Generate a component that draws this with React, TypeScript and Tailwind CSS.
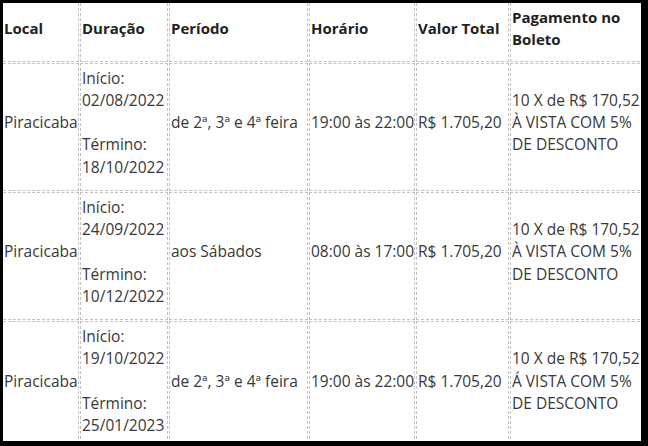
const cursos = [
  {
    local: "Piracicaba",
    inicio: "02/08/2022",
    termino: "18/10/2022",
    periodo: "de 2ª, 3ª e 4ª feira",
    horario: "19:00 às 22:00",
    valor: "R$ 1.705,20",
    vista: "À VISTA COM 5%",
  },
  {
    local: "Piracicaba",
    inicio: "24/09/2022",
    termino: "10/12/2022",
    periodo: "aos Sábados",
    horario: "08:00 às 17:00",
    valor: "R$ 1.705,20",
    vista: "À VISTA COM 5%",
  },
  {
    local: "Piracicaba",
    inicio: "19/10/2022",
    termino: "25/01/2023",
    periodo: "de 2ª, 3ª e 4ª feira",
    horario: "19:00 às 22:00",
    valor: "R$ 1.705,20",
    vista: "Á VISTA COM 5%",
  },
];

export default function App() {
  return (
    <div className="h-[446px] w-[648px] bg-black pb-[5px] pl-[3px] pr-[7px] pt-[3px]">
      <div
        className="h-full overflow-hidden bg-white text-[15.5px] leading-[22.25px] text-[#383838]"
        style={{ fontFamily: '"Open Sans", "Noto Sans", sans-serif' }}
      >
        <div className="grid grid-cols-[76px_88px_139px_106px_93px_135px] gap-px">
          <Cell col={0} header>Local</Cell>
          <Cell col={1} header>Duração</Cell>
          <Cell col={2} header>Período</Cell>
          <Cell col={3} header>Horário</Cell>
          <Cell col={4} header>Valor Total</Cell>
          <Cell col={5} header>
            Pagamento no
            <br />
            Boleto
          </Cell>

          {cursos.map((c, i) => (
            <Row key={i} c={c} />
          ))}
        </div>
      </div>
    </div>
  );
}

function Row({ c }: { c: (typeof cursos)[number] }) {
  return (
    <>
      <Cell col={0}>{c.local}</Cell>
      <Cell col={1}>
        Início:
        <br />
        {c.inicio}
        <br />
        <br />
        Término:
        <br />
        {c.termino}
      </Cell>
      <Cell col={2}>{c.periodo}</Cell>
      <Cell col={3}>{c.horario}</Cell>
      <Cell col={4}>{c.valor}</Cell>
      <Cell col={5}>
        10 X de R$ 170,52
        <br />
        {c.vista}
        <br />
        DE DESCONTO
      </Cell>
    </>
  );
}

function Cell({
  col,
  header,
  children,
}: {
  col: number;
  header?: boolean;
  children: React.ReactNode;
}) {
  const lados = [
    header ? "border-t-0 pt-[3px] pb-[10px]" : "border-t pt-[3px] pb-[12px]",
    "border-b",
    col === 0 ? "border-l-0" : "border-l",
    col === 5 ? "border-r-0" : "border-r",
  ].join(" ");
  return (
    <div
      className={`flex items-center whitespace-nowrap border-dashed border-[#c2c2c2] px-[1px] ${lados} ${
        header ? "text-[15px] font-bold text-[#222]" : ""
      }`}
    >
      <div>{children}</div>
    </div>
  );
}
